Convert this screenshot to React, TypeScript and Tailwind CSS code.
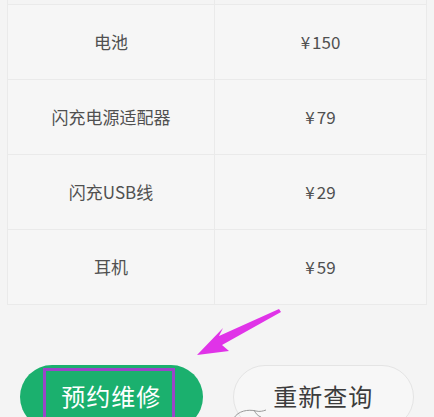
const rows = [
  { name: "电池", price: "¥150" },
  { name: "闪充电源适配器", price: "¥79" },
  { name: "闪充USB线", price: "¥29" },
  { name: "耳机", price: "¥59" },
];

export default function App() {
  return (
    <div
      className="relative h-[417px] w-[434px] overflow-hidden bg-[#f4f4f4]"
      style={{ fontFamily: '"Noto Sans CJK SC", "Noto Sans", sans-serif' }}
    >
      <div className="px-[7px]">
        {/* cut-off row above */}
        <div className="grid h-[4px] grid-cols-[207px_1fr] border-x border-[#eaeaea]">
          <div className="border-r border-[#eaeaea]" />
          <div />
        </div>
        <div className="border-x border-t border-[#eaeaea] bg-[#f6f6f6]">
          {rows.map((r) => (
            <div
              key={r.name}
              className="grid h-[75px] grid-cols-[207px_1fr] border-b border-[#eaeaea] text-[17px] text-[#505050]"
            >
              <div className="flex items-center justify-center border-r border-[#eaeaea]">
                {r.name}
              </div>
              <div className="flex items-center justify-center">
                <span className="mr-[2px]">¥</span>
                {r.price.slice(1)}
              </div>
            </div>
          ))}
        </div>
      </div>

      <div className="mt-[60px] flex gap-[30px] px-[20px]">
        <button className="relative flex h-16 w-[183px] items-center justify-center rounded-full bg-[#1bb06e] pb-[3px] text-[24px] text-white">
          <span className="absolute left-[23px] top-[3px] h-[70px] w-[132px] border-[3px] border-[#9b45c9]" />
          <span className="relative tracking-[1px]">预约维修</span>
        </button>
        <button className="flex h-16 w-[182px] items-center justify-center rounded-full border border-[#e4e4e4] bg-[#f7f7f7] pb-[3px] text-[24px] text-[#3c3c3c]">
          <span className="tracking-[1px]">重新查询</span>
        </button>
      </div>

      {/* annotation arrow */}
      <svg className="absolute left-[190px] top-[305px]" width="95" height="55" viewBox="0 0 95 55">
        <path
          d="M89 4 L29 31 L33 23 L7 50 L39 46 L32 40 L91 7 Z"
          fill="#e033e8"
        />
      </svg>

      {/* small scribble */}
      <svg className="absolute left-[232px] top-[405px]" width="40" height="14" viewBox="0 0 40 14">
        <path d="M2 13 C6 6 16 4 24 6 C28 7 31 6 34 5" stroke="#9a9a9a" strokeWidth="1" fill="none" />
        <path d="M22 5 C24 9 26 11 29 12" stroke="#9a9a9a" strokeWidth="1" fill="none" />
      </svg>
    </div>
  );
}
